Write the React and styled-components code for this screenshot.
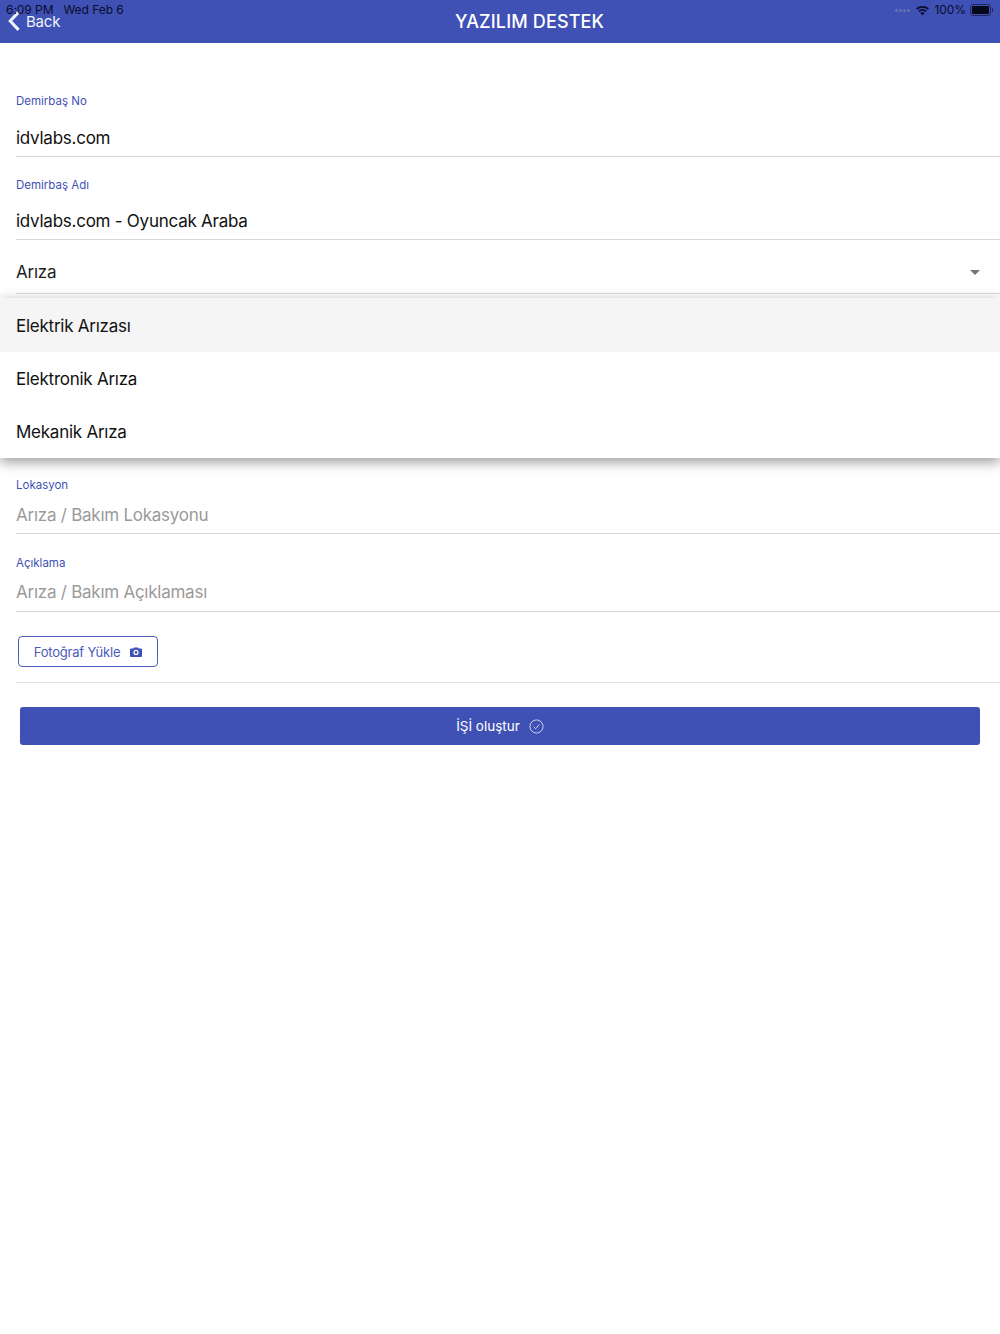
import React from 'react';
import styled, { createGlobalStyle } from 'styled-components';

const GlobalStyle = createGlobalStyle`
  html, body {
    margin: 0;
    padding: 0;
    background: #fff;
    font-family: Inter, "Liberation Sans", sans-serif;
  }
`;

const Page = styled.div`
  position: relative;
  width: 1000px;
  height: 1334px;
  overflow: hidden;
  background: #fff;
`;

const StatusBar = styled.div`
  position: absolute;
  top: 3px;
  left: 6px;
  right: 7px;
  height: 14px;
  display: flex;
  align-items: center;
  justify-content: space-between;
  font-size: 12px;
  letter-spacing: -0.05px;
  line-height: 14px;
  color: #0a0d2c;
`;

const StatusGroup = styled.div`
  display: flex;
  align-items: center;
  gap: ${p => p.$gap || 0}px;
`;

const SignalDots = styled.div`
  display: flex;
  gap: 1px;
  margin-right: 1px;
`;

const Dot = styled.span`
  width: 3px;
  height: 3px;
  border-radius: 50%;
  background: #6a74b4;
`;

const Battery = styled.div`
  display: flex;
  align-items: center;
`;

const BatteryBody = styled.div`
  width: 17px;
  height: 8px;
  border: 1px solid #20295f;
  border-radius: 3px;
  padding: 1px;
  background: #05071a;
  background-clip: content-box;
`;

const BatteryCap = styled.div`
  width: 1px;
  height: 4px;
  margin-left: 1px;
  background: #20295f;
`;

const Header = styled.header`
  height: 43px;
  background: #3f51b5;
  display: flex;
  align-items: flex-end;
  color: #fff;
`;

const BackButton = styled.div`
  width: 59px;
  height: 43px;
  flex-shrink: 0;
  padding: 0 0 1px 8px;
  box-sizing: border-box;
  display: flex;
  align-items: center;
  gap: 6px;
  font-size: 15px;
  letter-spacing: -0.2px;
  color: #f0f2fb;
  svg {
    flex-shrink: 0;
  }
`;

const Title = styled.h1`
  flex: 1;
  margin: 0;
  height: 43px;
  line-height: 43px;
  text-align: center;
  font-size: 18px;
  letter-spacing: 0.15px;
  font-weight: 500;
`;

const Form = styled.div`
  padding: 48px 0 0 16px;
`;

const Field = styled.div`
  position: relative;
  height: ${p => p.$height}px;
  margin-bottom: ${p => p.$after || 0}px;
  border-bottom: 1px solid #d9d9d9;
  box-sizing: border-box;
  display: flex;
  flex-direction: column;
`;

const Label = styled.label`
  font-size: 11.5px;
  line-height: 20px;
  color: #3f51b5;
`;

const Value = styled.div`
  margin-top: ${p => p.$top}px;
  font-size: 17px;
  letter-spacing: -0.25px;
  line-height: 24px;
  color: ${p => (p.$placeholder ? '#9a9a9a' : '#111')};
`;

const SelectRow = styled.div`
  display: flex;
  align-items: center;
  justify-content: space-between;
  height: 53px;
  padding: 11px 20px 0 0;
  box-sizing: border-box;
  font-size: 17px;
  letter-spacing: -0.25px;
  color: #222;
`;

const Caret = styled.span`
  width: 0;
  height: 0;
  border-left: 5px solid transparent;
  border-right: 5px solid transparent;
  border-top: 5px solid #757575;
`;

const Menu = styled.div`
  position: absolute;
  top: 58px;
  left: -16px;
  width: 1000px;
  height: 160px;
  background: #fff;
  box-shadow: 0 4px 12px rgba(0, 0, 0, 0.4);
  z-index: 2;
`;

const MenuItem = styled.div`
  height: ${p => (p.$active ? 54 : 53)}px;
  padding: ${p => (p.$active ? 2 : 0)}px 0 0 16px;
  box-sizing: border-box;
  display: flex;
  align-items: center;
  font-size: 17px;
  letter-spacing: -0.25px;
  color: #111;
  background: ${p => (p.$active ? '#f5f5f5' : '#fff')};
`;

const UploadRow = styled.div`
  height: 71px;
  padding: 24px 0 0 2px;
  box-sizing: border-box;
  border-bottom: 1px solid #e2e2e2;
`;

const UploadButton = styled.button`
  width: 140px;
  height: 31px;
  padding: 0;
  display: flex;
  align-items: center;
  justify-content: center;
  gap: 10px;
  background: #fff;
  border: 1.5px solid #4d5ebd;
  border-radius: 4px;
  color: #4a5bbb;
  font-family: inherit;
  font-size: 13px;
  letter-spacing: -0.2px;
  box-sizing: border-box;
`;

const SubmitWrap = styled.div`
  padding: 24px 20px 0;
`;

const SubmitButton = styled.button`
  width: 100%;
  height: 38px;
  display: flex;
  align-items: center;
  justify-content: center;
  gap: 9px;
  background: #3f51b5;
  border: 0;
  border-radius: 3px;
  color: #fff;
  font-family: inherit;
  font-size: 13.5px;
`;

const BackIcon = () => (
  <svg width="12" height="20" viewBox="0 0 12 20" fill="none" stroke="#f0f2fb" strokeWidth="3">
    <path d="M10.6 1.1 2.2 10l8.4 8.9" />
  </svg>
);

const WifiIcon = () => (
  <svg width="15" height="11" viewBox="0 0 16 12" fill="#0a0d2c">
    <path d="M8 11.5 5.6 8.8a3.6 3.6 0 0 1 4.8 0z" />
    <path d="M4.6 7.7 3.3 6.2a7.2 7.2 0 0 1 9.4 0l-1.3 1.5a5.2 5.2 0 0 0-6.8 0z" />
    <path d="M2.3 5.1 1 3.6a10.6 10.6 0 0 1 14 0l-1.3 1.5a8.7 8.7 0 0 0-11.4 0z" />
  </svg>
);

const CameraIcon = () => (
  <svg width="12" height="10" viewBox="0 0 12 10">
    <path
      fill="#3f51b5"
      fillRule="evenodd"
      d="M1 1.5h2.4L4 .4h4l.6 1.1H11a1 1 0 0 1 1 1V9a1 1 0 0 1-1 1H1a1 1 0 0 1-1-1V2.5a1 1 0 0 1 1-1zM6 8a2.6 2.6 0 1 0 0-5.2A2.6 2.6 0 0 0 6 8zm0-1.2a1.4 1.4 0 1 1 0-2.8 1.4 1.4 0 0 1 0 2.8z"
    />
  </svg>
);

const CheckCircleIcon = () => (
  <svg width="15" height="15" viewBox="0 0 16 16" fill="none" stroke="#d5d9ef" strokeWidth="1">
    <circle cx="8" cy="8" r="7" />
    <path d="M5 8.4 7.1 10.4 11 5.8" />
  </svg>
);

export default function App() {
  return (
    <Page>
      <GlobalStyle />
      <Header>
        <BackButton>
          <BackIcon />
          Back
        </BackButton>
        <Title>YAZILIM DESTEK</Title>
      </Header>
      <StatusBar>
        <StatusGroup $gap={10}>
          <span>6:09 PM</span>
          <span>Wed Feb 6</span>
        </StatusGroup>
        <StatusGroup $gap={4}>
          <SignalDots>
            <Dot />
            <Dot />
            <Dot />
            <Dot />
          </SignalDots>
          <WifiIcon />
          <span>100%</span>
          <Battery>
            <BatteryBody />
            <BatteryCap />
          </Battery>
        </StatusGroup>
      </StatusBar>
      <Form>
        <Field $height={66} $after={18}>
          <Label>Demirbaş No</Label>
          <Value $top={15}>idvlabs.com</Value>
        </Field>
        <Field $height={65}>
          <Label>Demirbaş Adı</Label>
          <Value $top={14}>idvlabs.com - Oyuncak Araba</Value>
        </Field>
        <Field $height={54} $after={181}>
          <SelectRow>
            Arıza
            <Caret />
          </SelectRow>
          <Menu>
            <MenuItem $active>Elektrik Arızası</MenuItem>
            <MenuItem>Elektronik Arıza</MenuItem>
            <MenuItem>Mekanik Arıza</MenuItem>
          </Menu>
        </Field>
        <Field $height={59} $after={19}>
          <Label>Lokasyon</Label>
          <Value $top={8} $placeholder>Arıza / Bakım Lokasyonu</Value>
        </Field>
        <Field $height={59}>
          <Label>Açıklama</Label>
          <Value $top={7} $placeholder>Arıza / Bakım Açıklaması</Value>
        </Field>
        <UploadRow>
          <UploadButton>
            Fotoğraf Yükle
            <CameraIcon />
          </UploadButton>
        </UploadRow>
      </Form>
      <SubmitWrap>
        <SubmitButton>
          İŞİ oluştur
          <CheckCircleIcon />
        </SubmitButton>
      </SubmitWrap>
    </Page>
  );
}
